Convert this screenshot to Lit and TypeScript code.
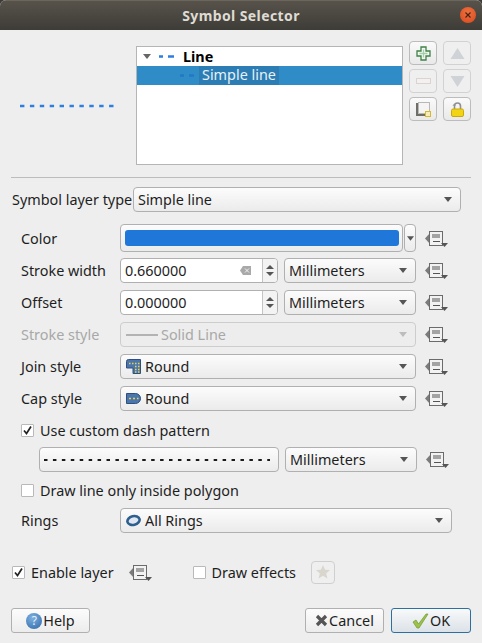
import { LitElement, html, css, svg } from "lit";
import { customElement } from "lit/decorators.js";

const arrow = (cls = "") => html`<svg class="arrow ${cls}" width="8" height="5" viewBox="0 0 8 5"><path d="M0 0h8L4 5z" /></svg>`;

const ddIcon = () => html`<svg class="dd" width="24" height="17" viewBox="0 0 24 17">
  <path d="M0 8.500 5 3v11z" fill="#7b7b7b" />
  <rect x="4.500" y="1.500" width="13" height="14" fill="#f2f2f2" stroke="#6b6b6b" />
  <path d="M7 5h8M7 7h8" stroke="#555" stroke-width="1" />
  <path d="M8 11.500h7" stroke="#555" stroke-width="1" />
  <path d="M16 13h7l-3.500 4z" fill="#555" />
</svg>`;

const joinIcon = svg`<svg class="ico" width="15" height="15" viewBox="0 0 15 15">
  <path d="M.5 2.500Q.5 .5 2.500 .5H14.500v14H7V9H.5z" fill="#4b76ad" stroke="#2f4f7f" />
  <path d="M3 4.500h1.500M6 4.500h1.500M9 4.500h1.500M12 4.500h1.500M9 7.500h1.500M12 7.500h1.500M9 10.500h1.500M12 10.500h1.500M9 13h1.500M12 13h1.500" stroke="#f0d24a" stroke-width="1.500" />
</svg>`;

const capIcon = svg`<svg class="ico" width="15" height="11" viewBox="0 0 15 11">
  <path d="M.5.5H9.500a5 5 0 0 1 0 10H.5z" fill="#4b76ad" stroke="#2f4f7f" />
  <path d="M3 5.500h2M7 5.500h2M11 5.500h1.500" stroke="#f0d24a" stroke-width="1.500" />
</svg>`;

const ringIcon = svg`<svg class="ico" width="15" height="13" viewBox="0 0 15 13">
  <ellipse cx="7.500" cy="6.500" rx="6.200" ry="4.400" transform="rotate(-14 7.500 6.500)" fill="#dfe8f2" stroke="#2f5f8f" stroke-width="2.600" />
</svg>`;

const tick = html`<svg width="9" height="9" viewBox="0 0 9 9"><path d="M1 4.500l2.500 3L8 .5" fill="none" stroke="#222" stroke-width="1.700" /></svg>`;

@customElement("app-root")
export class AppRoot extends LitElement {
  static styles = css`
    :host {
      display: block;
      width: 482px;
      height: 643px;
      background: #3c3b37;
      overflow: hidden;
      font-family: "Noto Sans", "Open Sans", sans-serif;
      font-size: 14.4px;
      color: #1e1e1e;
    }
    .win {
      height: 643px;
      background: #eeeeee;
      border-radius: 6px 6px 0 0;
      overflow: hidden;
    }
    .titlebar {
      height: 30px;
      box-sizing: border-box;
      border-top: 1px solid #6a665e;
      background: linear-gradient(#57534b, #3e3c37);
      display: flex;
      align-items: center;
      justify-content: center;
      position: relative;
      color: #dfdbd2;
      font-weight: 700;
      font-size: 14px;
      letter-spacing: 0.4px;
    }
    .close {
      position: absolute;
      right: 6px;
      top: 6px;
      width: 16px;
      height: 16px;
      border-radius: 50%;
      background: radial-gradient(circle at 50% 35%, #ef7140, #d8481d);
      display: flex;
      align-items: center;
      justify-content: center;
    }
    .content {
      padding: 0 11px;
    }
    .top {
      display: flex;
      margin-top: 11px;
      height: 124px;
    }
    .preview {
      width: 125px;
      height: 119px;
      margin-top: 5px;
      padding: 1px 0 0 9px;
      box-sizing: border-box;
      display: flex;
      align-items: center;
    }
    .tree {
      width: 267px;
      height: 119px;
      margin-top: 5px;
      box-sizing: border-box;
      border: 1px solid #b5b5b5;
      background: #fff;
    }
    .tree-row {
      height: 19px;
      display: flex;
      align-items: center;
    }
    .tree-row.first {
      font-weight: 700;
      color: #000;
    }
    .tree-row.first .arrow {
      margin-left: 6px;
      margin-right: 8px;
      fill: #666;
    }
    .tree-row.first svg.dash {
      margin-right: 8px;
    }
    .tree-row.sel {
      background: #308cc6;
      color: #e6f1f8;
      padding-left: 43px;
    }
    .sel-text {
      background: #2b7db3;
      height: 19px;
      line-height: 18px;
      padding: 0 3px;
      margin-left: 5px;
    }
    .tools {
      display: grid;
      grid-template-columns: 28px 28px;
      grid-auto-rows: 24px;
      column-gap: 6px;
      row-gap: 4px;
      margin-left: 6px;
    }
    .tool {
      box-sizing: border-box;
      border: 1px solid #bcbcbc;
      border-radius: 4px;
      background: linear-gradient(#fafafa, #e9e9e9);
      display: flex;
      align-items: center;
      justify-content: center;
    }
    .tool.off {
      border-color: #d2d2d2;
      background: #efefef;
    }
    .sep {
      height: 1px;
      width: 460px;
      margin-top: 12px;
      background: #bcbcbc;
    }
    .line {
      display: flex;
      align-items: center;
    }
    .layer-type {
      margin-top: 9px;
      height: 25px;
      padding-left: 1px;
    }
    .layer-type .lbl {
      width: 121px;
    }
    .form {
      padding-left: 10px;
      margin-top: 12px;
    }
    .lbl {
      width: 99px;
      flex: none;
      white-space: nowrap;
    }
    .lbl.off {
      color: #a8a8a8;
    }
    .row {
      height: 25px;
      margin-top: 7px;
    }
    .row.color {
      height: 28px;
      margin-top: 0;
      margin-bottom: -1px;
    }
    .row .dd {
      margin-left: 9px;
      flex: none;
    }
    .combo,
    .spin,
    .swatch,
    .swatch-drop,
    .dash-btn {
      box-sizing: border-box;
      border: 1px solid #b0b0b0;
      border-radius: 4px;
      background: linear-gradient(#fcfcfc, #ebebeb);
      height: 25px;
      display: flex;
      align-items: center;
      flex: none;
    }
    .combo {
      padding: 0 8px 0 4px;
    }
    .combo .val {
      flex: 1;
      white-space: nowrap;
      display: flex;
      align-items: center;
    }
    .arrow {
      fill: #555;
      flex: none;
    }
    .ico {
      margin: 0 4px 0 1px;
      flex: none;
    }
    .w-type {
      width: 328px;
    }
    .w-unit {
      width: 132px;
      margin-left: 6px;
    }
    .w-full {
      width: 296px;
    }
    .w-rings {
      width: 332px;
    }
    .swatch {
      width: 283px;
      height: 28px;
      padding: 5px 3px 5px 4px;
    }
    .swatch i {
      display: block;
      width: 100%;
      height: 16px;
      border-radius: 3px;
      background: #1f78d9;
    }
    .swatch-drop {
      width: 12px;
      height: 28px;
      margin-left: 1px;
      justify-content: center;
    }
    .swatch-drop .arrow {
      width: 7px;
    }
    .spin {
      width: 158px;
      background: #fff;
      padding-left: 4px;
      overflow: hidden;
    }
    .spin .num {
      flex: 1;
    }
    .clear {
      width: 11px;
      height: 9px;
      margin-right: 11px;
      flex: none;
    }
    .steps {
      width: 14px;
      height: 100%;
      border-left: 1px solid #c4c4c4;
      background: #f3f3f3;
      flex: none;
      display: flex;
      flex-direction: column;
      align-items: center;
      justify-content: center;
      gap: 3px;
    }
    .steps svg {
      fill: #555;
      display: block;
    }
    .disabled {
      border-color: #cdcdcd;
      background: #ededed;
      color: #a8a8a8;
    }
    .disabled .arrow {
      fill: #bdbdbd;
    }
    .solid {
      width: 32px;
      height: 2px;
      background: #b3b3b3;
      margin: 0 3px 0 1px;
      flex: none;
    }
    .check {
      box-sizing: border-box;
      width: 13px;
      height: 13px;
      border: 1px solid #b9b9b9;
      border-radius: 1px;
      background: #fff;
      flex: none;
      display: flex;
      align-items: center;
      justify-content: center;
      margin-right: 6px;
    }
    .check-row {
      height: 20px;
      white-space: nowrap;
    }
    .r-check1 {
      margin-top: 9px;
    }
    .r-dash {
      margin-top: 7px;
      padding-left: 18px;
    }
    .dash-btn {
      width: 240px;
      padding-left: 4px;
      overflow: hidden;
    }
    .r-check2 {
      margin-top: 8px;
    }
    .r-rings {
      margin-top: 8px;
    }
    .effects {
      margin-top: 27px;
      padding-left: 1px;
      height: 24px;
      white-space: nowrap;
    }
    .effects .dd {
      margin-left: 15px;
      flex: none;
    }
    .effects .check.second {
      margin-left: 40px;
    }
    .star {
      box-sizing: border-box;
      width: 24px;
      height: 23px;
      margin-left: 15px;
      border: 1px solid #cfcfcf;
      border-radius: 4px;
      background: #efefef;
      display: flex;
      align-items: center;
      justify-content: center;
    }
    .buttons {
      margin-top: 24px;
      display: flex;
      height: 25px;
    }
    .btn {
      box-sizing: border-box;
      height: 25px;
      width: 79px;
      border: 1px solid #b0b0b0;
      border-radius: 3px;
      background: linear-gradient(#fcfcfc, #ececec);
      display: flex;
      align-items: center;
      justify-content: center;
      gap: 1px;
    }
    .btn.cancel {
      margin-left: auto;
    }
    .btn.ok {
      margin-left: 7px;
      width: 80px;
      border-color: #2f6f9e;
      background: linear-gradient(#f8f9fa, #dbe2e8);
    }
    .help-ico {
      width: 16px;
      height: 16px;
      border-radius: 50%;
      background: radial-gradient(circle at 40% 30%, #7fb0e0, #2c67a8);
      color: #e8f1fa;
      font-size: 12px;
      line-height: 16px;
      text-align: center;
      flex: none;
    }
  `;

  private combo(text: string, cls: string, icon?: unknown) {
    return html`<div class="combo ${cls}">
      <span class="val">${icon}${text}</span>${arrow()}
    </div>`;
  }

  private steps() {
    return html`<div class="steps">
      <svg width="8" height="4" viewBox="0 0 8 4"><path d="M4 0l4 4H0z" /></svg>
      <svg width="8" height="4" viewBox="0 0 8 4"><path d="M0 0h8L4 4z" /></svg>
    </div>`;
  }

  render() {
    return html`
      <div class="win">
        <div class="titlebar">
          Symbol Selector
          <div class="close">
            <svg width="8" height="8" viewBox="0 0 8 8"><path d="M1.500 1.500l5 5M6.500 1.500l-5 5" stroke="#4a2412" stroke-width="1.200" /></svg>
          </div>
        </div>
        <div class="content">
          <div class="top">
            <div class="preview">
              <svg width="96" height="4" viewBox="0 0 96 4"><line x1="0" y1="2" x2="96" y2="2" stroke="#2a7fe0" stroke-width="2.600" stroke-dasharray="4.400 5.500" /></svg>
            </div>
            <div class="tree">
              <div class="tree-row first">
                ${arrow()}
                <svg class="dash" width="16" height="3" viewBox="0 0 16 3"><path d="M0 1.500h4M9 1.500h6" stroke="#2a7fe0" stroke-width="2.400" /></svg>
                Line
              </div>
              <div class="tree-row sel">
                <svg width="14" height="3" viewBox="0 0 14 3"><path d="M0 1.500h4M9 1.500h5" stroke="#1f78c8" stroke-width="2.400" /></svg>
                <span class="sel-text">Simple line</span>
              </div>
            </div>
            <div class="tools">
              <div class="tool">
                <svg width="15" height="15" viewBox="0 0 15 15">
                  <path d="M5 1h5v4h4v5h-4v4H5v-4H1V5h4z" fill="#f3f8f2" stroke="#3f8148" stroke-width="1.300" />
                  <path d="M7.500 3.500v8M3.500 7.500h8" stroke="#a6cfa9" stroke-width="1.300" />
                </svg>
              </div>
              <div class="tool off">
                <svg width="15" height="11" viewBox="0 0 15 11"><path d="M7.500 0L14.500 11H.5z" fill="#cfd2d6" /></svg>
              </div>
              <div class="tool off">
                <svg width="15" height="7" viewBox="0 0 15 7"><rect x=".5" y=".5" width="14" height="5" fill="#f3f0f0" stroke="#dbd2d2" /></svg>
              </div>
              <div class="tool off">
                <svg width="15" height="11" viewBox="0 0 15 11"><path d="M.5 0h14L7.500 11z" fill="#cfd2d6" /></svg>
              </div>
              <div class="tool">
                <svg width="15" height="15" viewBox="0 0 15 15">
                  <path d="M0 1h2v11h11v2H0z" fill="#6e6e66" />
                  <rect x="2.500" y=".5" width="11" height="11" fill="#f4f4f4" stroke="#b8b8b8" />
                  <rect x="9.500" y="9.500" width="5" height="5" fill="#f6eeb5" stroke="#d9b92c" />
                </svg>
              </div>
              <div class="tool">
                <svg width="13" height="16" viewBox="0 0 13 16">
                  <path d="M3.500 8V5a3 3 0 0 1 6 0v3" fill="none" stroke="#8f8f8f" stroke-width="1.600" />
                  <path d="M1.500 4.500l2-2 1 2.500z" fill="#8f8f8f" />
                  <rect x=".5" y="8" width="12" height="7.500" rx="1.500" fill="#f2d415" stroke="#c9a90e" />
                </svg>
              </div>
            </div>
          </div>
          <div class="sep"></div>
          <div class="line layer-type">
            <span class="lbl">Symbol layer type</span>
            ${this.combo("Simple line", "w-type")}
          </div>
          <div class="form">
            <div class="line row color">
              <span class="lbl">Color</span>
              <div class="swatch"><i></i></div>
              <div class="swatch-drop">${arrow()}</div>
              ${ddIcon()}
            </div>
            <div class="line row">
              <span class="lbl">Stroke width</span>
              <div class="spin">
                <span class="num">0.660000</span>
                <svg class="clear" viewBox="0 0 11 9"><path d="M3 0h8v9H3L0 4.500z" fill="#a9a9a9" /><path d="M5 2.500l4 4M9 2.500l-4 4" stroke="#f2f2f2" /></svg>
                ${this.steps()}
              </div>
              ${this.combo("Millimeters", "w-unit")}
              ${ddIcon()}
            </div>
            <div class="line row">
              <span class="lbl">Offset</span>
              <div class="spin">
                <span class="num">0.000000</span>
                ${this.steps()}
              </div>
              ${this.combo("Millimeters", "w-unit")}
              ${ddIcon()}
            </div>
            <div class="line row">
              <span class="lbl off">Stroke style</span>
              <div class="combo w-full disabled">
                <span class="val"><span class="solid"></span>Solid Line</span>${arrow()}
              </div>
              ${ddIcon()}
            </div>
            <div class="line row">
              <span class="lbl">Join style</span>
              ${this.combo("Round", "w-full", joinIcon)}
              ${ddIcon()}
            </div>
            <div class="line row">
              <span class="lbl">Cap style</span>
              ${this.combo("Round", "w-full", capIcon)}
              ${ddIcon()}
            </div>
            <div class="line check-row r-check1">
              <span class="check">${tick}</span>
              Use custom dash pattern
            </div>
            <div class="line row r-dash">
              <div class="dash-btn">
                <svg width="226" height="3" viewBox="0 0 226 3"><line x1="0" y1="2" x2="226" y2="2" stroke="#1a1a1a" stroke-width="2" stroke-dasharray="3.500 5.430" /></svg>
              </div>
              ${this.combo("Millimeters", "w-unit")}
              ${ddIcon()}
            </div>
            <div class="line check-row r-check2">
              <span class="check"></span>
              Draw line only inside polygon
            </div>
            <div class="line row r-rings">
              <span class="lbl">Rings</span>
              ${this.combo("All Rings", "w-rings", ringIcon)}
            </div>
          </div>
          <div class="line effects">
            <span class="check">${tick}</span>
            Enable layer
            ${ddIcon()}
            <span class="check second"></span>
            Draw effects
            <div class="star">
              <svg width="14" height="14" viewBox="0 0 14 14"><path d="M7 0l2 4.700 5 .4-3.800 3.300 1.200 5L7 10.700 2.600 13.400l1.200-5L0 5.100l5-.4z" fill="#d9d6cd" /></svg>
            </div>
          </div>
          <div class="buttons">
            <div class="btn"><span class="help-ico">?</span>Help</div>
            <div class="btn cancel">
              <svg width="13" height="13" viewBox="0 0 13 13"><path d="M2 2l9 9M11 2l-9 9" stroke="#555" stroke-width="3.200" /></svg>
              Cancel
            </div>
            <div class="btn ok">
              <svg width="17" height="16" viewBox="0 0 17 16"><path d="M1 9l3-2 2.500 4L14 1h2L7 15H5z" fill="#9cc24a" stroke="#6f9a2c" stroke-width=".7" /></svg>
              OK
            </div>
          </div>
        </div>
      </div>
    `;
  }
}
